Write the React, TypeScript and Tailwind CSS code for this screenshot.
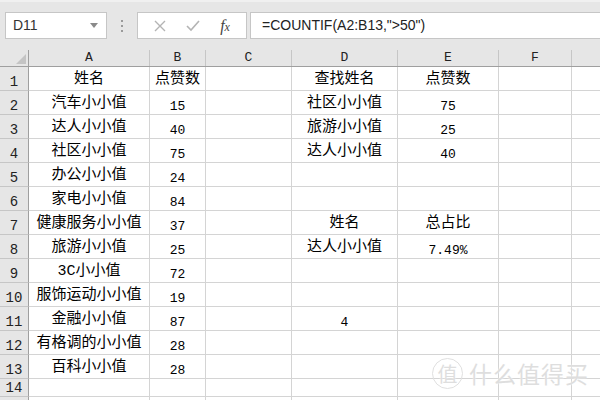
import React from 'react';

type Row = { a?: string; b?: string; d?: string; e?: string; h?: string; noLabel?: boolean };

const rows: Row[] = [
  { a: '姓名', b: '点赞数', d: '查找姓名', e: '点赞数' },
  { a: '汽车小小值', b: '15', d: '社区小小值', e: '75' },
  { a: '达人小小值', b: '40', d: '旅游小小值', e: '25' },
  { a: '社区小小值', b: '75', d: '达人小小值', e: '40' },
  { a: '办公小小值', b: '24' },
  { a: '家电小小值', b: '84' },
  { a: '健康服务小小值', b: '37', d: '姓名', e: '总占比' },
  { a: '旅游小小值', b: '25', d: '达人小小值', e: '7.49%' },
  { a: '3C小小值', b: '72' },
  { a: '服饰运动小小值', b: '19' },
  { a: '金融小小值', b: '87', d: '4' },
  { a: '有格调的小小值', b: '28' },
  { a: '百科小小值', b: '28' },
  { h: 'h-[18px]' },
  { h: 'h-[18px]', noLabel: true }, // only its top edge shows in the window
];

const cellFont = { fontFamily: '"Liberation Mono", "Noto Sans CJK SC", monospace' };

// numbers are drawn smaller and a touch lower, like the sheet's bitmap font
const isNum = (s?: string) => !!s && /^[0-9.%]+$/.test(s);

const Cell: React.FC<{ w: string; text?: string }> = ({ w, text }) => (
  <div
    className={`${w} h-full shrink-0 border-r border-b border-[#d4d4d4] flex items-end justify-center text-black whitespace-nowrap`}
  >
    {text &&
      (isNum(text) ? (
        <span className="text-[13px] leading-[13px] pb-[1px]">{text}</span>
      ) : (
        <span className="text-[15px] leading-[16px] pb-[2px]">{text}</span>
      ))}
  </div>
);

const HeaderCell: React.FC<{ w: string; label: string }> = ({ w, label }) => (
  <div
    className={`${w} h-full shrink-0 border-r border-[#c6c6c6] flex items-center justify-center text-[13px] text-[#222]`}
  >
    {label}
  </div>
);

export default function App() {
  return (
    <div className="w-[600px] h-[400px] overflow-hidden bg-white relative select-none" style={cellFont}>
      {/* toolbar */}
      <div className="h-[50px] bg-[#e6e6e6] border-t-[2px] border-[#f0f0f0] flex items-start pt-[10px]">
        <div
          className="ml-[5px] w-[102px] h-[27px] bg-white border border-[#c6c6c6] flex items-center justify-between pl-[7px] pr-[8px] text-[14px] text-[#333]"
          style={{ fontFamily: '"Liberation Sans", "Noto Sans", sans-serif' }}
        >
          <span>D11</span>
          <svg width="8" height="5" viewBox="0 0 8 5"><path d="M0 0 L8 0 L4 5 Z" fill="#8a8a8a" /></svg>
        </div>
        <div className="w-[30px] h-[27px] flex flex-col items-center justify-center gap-[3px]">
          <span className="w-[2px] h-[2px] bg-[#9a9a9a]" />
          <span className="w-[2px] h-[2px] bg-[#9a9a9a]" />
          <span className="w-[2px] h-[2px] bg-[#9a9a9a]" />
        </div>
        <div className="w-[110px] h-[27px] bg-white border border-[#c6c6c6] flex items-center justify-around px-[6px]">
          <svg width="12" height="12" viewBox="0 0 12 12">
            <path d="M1 1 L11 11 M11 1 L1 11" stroke="#b4b4b4" strokeWidth="1.4" />
          </svg>
          <svg width="14" height="12" viewBox="0 0 14 12">
            <path d="M1 6 L5 10 L13 1" stroke="#b4b4b4" strokeWidth="1.6" fill="none" />
          </svg>
          <span
            className="text-[16px] italic text-[#444] leading-none"
            style={{ fontFamily: '"Liberation Serif", serif' }}
          >
            f<span className="text-[12px]">x</span>
          </span>
        </div>
        <div
          className="ml-[3px] flex-1 h-[27px] bg-white border border-r-0 border-[#c6c6c6] flex items-center pl-[11px] text-[14px] text-[#222]"
          style={{ fontFamily: '"Liberation Sans", "Noto Sans", sans-serif' }}
        >
          =COUNTIF(A2:B13,"&gt;50")
        </div>
      </div>

      {/* column headers */}
      <div className="h-[17px] flex bg-[#e6e6e6] border-b border-[#9f9f9f]">
        <div className="w-[29px] h-full shrink-0 border-r border-[#9f9f9f] flex items-end justify-end pr-[2px] pb-[2px]">
          <svg width="10" height="10" viewBox="0 0 10 10"><path d="M10 0 L10 10 L0 10 Z" fill="#c4c4c4" /></svg>
        </div>
        <HeaderCell w="w-[121px]" label="A" />
        <HeaderCell w="w-[56px]" label="B" />
        <HeaderCell w="w-[86px]" label="C" />
        <HeaderCell w="w-[106px]" label="D" />
        <HeaderCell w="w-[101px]" label="E" />
        <HeaderCell w="w-[73px]" label="F" />
        <div className="flex-1" />
      </div>

      {/* rows */}
      {rows.map((r, i) => (
        <div key={i} className={`${r.h ?? 'h-[24px]'} flex`}>
          <div className="w-[29px] h-full shrink-0 bg-[#e6e6e6] border-r border-[#9f9f9f] border-b border-b-[#c6c6c6] flex items-end justify-center pb-[1px] text-[14px] leading-[14px] text-[#222]">
            {r.noLabel ? null : i + 1}
          </div>
          <Cell w="w-[121px]" text={r.a} />
          <Cell w="w-[56px]" text={r.b} />
          <Cell w="w-[86px]" />
          <Cell w="w-[106px]" text={r.d} />
          <Cell w="w-[101px]" text={r.e} />
          <Cell w="w-[73px]" />
          <div className="flex-1 h-full border-b border-[#d4d4d4]" />
        </div>
      ))}

      {/* watermark */}
      <div
        className="absolute left-[432px] top-[358px] flex items-center gap-[6px] text-[#dedede] [text-shadow:0_0_2px_#ffffff]"
        style={{ fontFamily: '"Noto Sans CJK SC", sans-serif' }}
      >
        <div className="w-[31px] h-[31px] rounded-full border-[1.5px] border-[#e0e0e0] flex items-center justify-center text-[20px] leading-none">
          值
        </div>
        <span className="text-[23px] leading-none tracking-[1px]">什么值得买</span>
      </div>
    </div>
  );
}
